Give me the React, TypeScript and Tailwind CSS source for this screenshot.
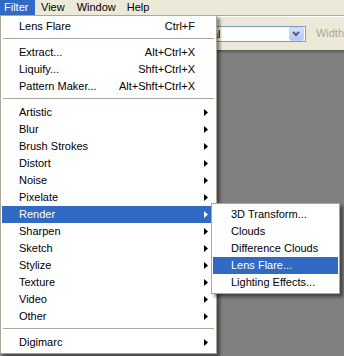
import React from "react";

const font = { fontFamily: '"Liberation Sans", Arial, sans-serif' };

type Item =
  | { kind: "sep" }
  | { kind: "item"; label: string; shortcut?: string; sub?: boolean; active?: boolean };

const items: Item[] = [
  { kind: "item", label: "Lens Flare", shortcut: "Ctrl+F" },
  { kind: "sep" },
  { kind: "item", label: "Extract...", shortcut: "Alt+Ctrl+X" },
  { kind: "item", label: "Liquify...", shortcut: "Shft+Ctrl+X" },
  { kind: "item", label: "Pattern Maker...", shortcut: "Alt+Shft+Ctrl+X" },
  { kind: "sep" },
  { kind: "item", label: "Artistic", sub: true },
  { kind: "item", label: "Blur", sub: true },
  { kind: "item", label: "Brush Strokes", sub: true },
  { kind: "item", label: "Distort", sub: true },
  { kind: "item", label: "Noise", sub: true },
  { kind: "item", label: "Pixelate", sub: true },
  { kind: "item", label: "Render", sub: true, active: true },
  { kind: "item", label: "Sharpen", sub: true },
  { kind: "item", label: "Sketch", sub: true },
  { kind: "item", label: "Stylize", sub: true },
  { kind: "item", label: "Texture", sub: true },
  { kind: "item", label: "Video", sub: true },
  { kind: "item", label: "Other", sub: true },
  { kind: "sep" },
  { kind: "item", label: "Digimarc", sub: true },
];

const subItems = [
  { label: "3D Transform..." },
  { label: "Clouds" },
  { label: "Difference Clouds" },
  { label: "Lens Flare...", active: true },
  { label: "Lighting Effects..." },
];

function Arrow({ white }: { white?: boolean }) {
  return (
    <svg width="4" height="7" viewBox="0 0 4 7" className="absolute right-[7px] top-[5px]">
      <path d="M0 0 L4 3.5 L0 7 Z" fill={white ? "#ffffff" : "#000000"} />
    </svg>
  );
}

export default function App() {
  return (
    <div className="relative w-[344px] h-[356px] overflow-hidden bg-[#808080] text-[11px] text-black" style={font}>
      {/* menu bar */}
      <div className="flex h-[15px] bg-[#ECE9D8] items-center leading-[15px]">
        <div className="h-[15px] w-[35px] bg-[#316AC5] text-white pl-[4px]">Filter</div>
        <div className="pl-[6px] pr-[7px]">View</div>
        <div className="pl-[5px] pr-[5px]">Window</div>
        <div className="pl-[6px]">Help</div>
      </div>
      <div className="h-px bg-[#ACA899]" />
      <div className="h-px bg-white" />
      {/* toolbar */}
      <div className="relative h-[33px] bg-[#ECE9D8] flex items-center pl-[160px]">
        <div className="relative w-[147px] h-[16px] border border-[#7F9DB9] bg-white flex items-center">
          <span className="pl-[24px] text-[11px] leading-[14px]">Normal</span>
          <div className="absolute right-px top-0 w-[15px] h-[14px] rounded-[2px] bg-gradient-to-b from-[#D4E0FB] to-[#B3C8F5] border border-[#C3D3FD] flex items-center justify-center">
            <svg width="8" height="6" viewBox="0 0 8 6">
              <path d="M1 1 L4 4 L7 1" stroke="#4D6185" strokeWidth="2" fill="none" />
            </svg>
          </div>
        </div>
        <span className="ml-[10px] text-[#ACA899]">Width</span>
      </div>
      <div className="h-[4px] bg-gradient-to-b from-[#555555] to-[#808080]" />

      {/* dropdown */}
      <div
        className="absolute left-0 top-[15px] w-[217px] bg-white border border-[#ACA899] px-px py-[2px]"
        style={{ boxShadow: "3px 3px 3px rgba(0,0,0,0.45)" }}
      >
        {items.map((it, i) =>
          it.kind === "sep" ? (
            <div key={i} className="h-[9px] pt-[3px] px-px">
              <div className="h-px bg-[#ACA899]" />
            </div>
          ) : (
            <div
              key={i}
              className={
                "relative h-[17px] leading-[17px] pl-[17px] " +
                (it.active ? "bg-[#316AC5] text-white" : "")
              }
            >
              {it.label}
              {it.shortcut && <span className="absolute right-[20px] top-0">{it.shortcut}</span>}
              {it.sub && <Arrow white={it.active} />}
            </div>
          )
        )}
      </div>

      {/* submenu */}
      <div
        className="absolute left-[211px] top-[203px] w-[129px] bg-white border border-[#ACA899] px-px py-[2px]"
        style={{ boxShadow: "3px 3px 3px rgba(0,0,0,0.45)" }}
      >
        {subItems.map((s, i) => (
          <div
            key={i}
            className={
              "h-[17px] leading-[17px] pl-[18px] whitespace-nowrap " +
              (s.active ? "bg-[#316AC5] text-white" : "")
            }
          >
            {s.label}
          </div>
        ))}
      </div>
    </div>
  );
}
